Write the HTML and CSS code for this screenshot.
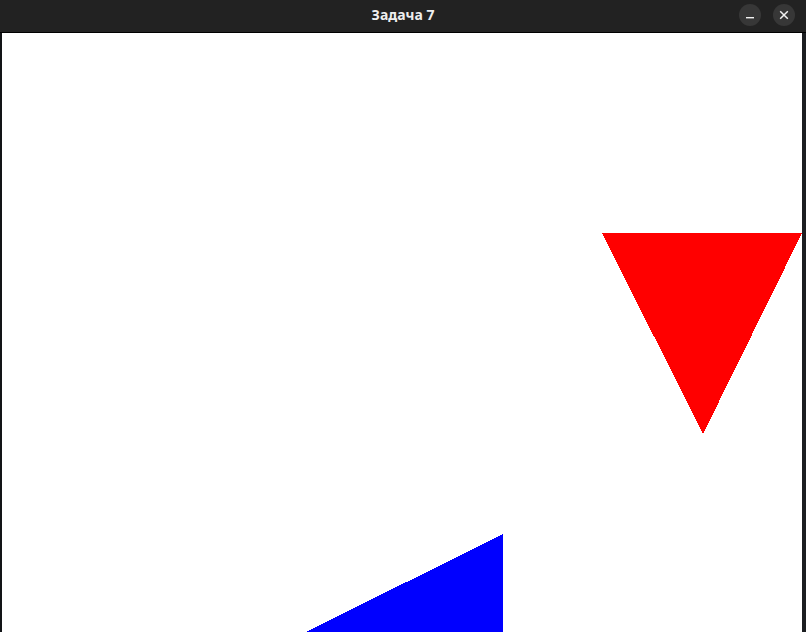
FILE: index.html
```html
<!DOCTYPE html>
<html lang="ru">
<head>
<meta charset="utf-8">
<title>Задача 7</title>
<link rel="stylesheet" href="styles.css">
</head>
<body>
<div class="window">
  <header class="titlebar">
    <span class="title">Задача 7</span>
    <div class="controls">
      <button class="ctl" aria-label="Свернуть">
        <svg width="10" height="10" viewBox="0 0 10 10"><rect x="1" y="7" width="8" height="1.4" fill="#f2f2f2"/></svg>
      </button>
      <button class="ctl" aria-label="Закрыть">
        <svg width="10" height="10" viewBox="0 0 10 10"><path d="M1.2 1.2 L8.8 8.8 M8.8 1.2 L1.2 8.8" stroke="#f2f2f2" stroke-width="1.5"/></svg>
      </button>
    </div>
  </header>
  <div class="body">
    <div class="edge-left"></div>
    <main class="canvas">
      <svg class="scene" width="800" height="599" viewBox="0 0 800 599">
        <polygon points="600,200 800,200 701,401" fill="#ff0000"/>
        <polygon points="501,501 501,700 101,700" fill="#0000ff"/>
      </svg>
    </main>
    <div class="edge-right"></div>
  </div>
</div>
</body>
</html>
```
FILE: styles.css
```css
html, body {
  margin: 0;
  padding: 0;
  background: #16181b;
  overflow: hidden;
}
.window {
  width: 806px;
  height: 632px;
  display: flex;
  flex-direction: column;
}
.titlebar {
  height: 32px;
  flex: 0 0 32px;
  background: #222222;
  border-bottom: 1px solid #000000;
  position: relative;
  display: flex;
  align-items: center;
  justify-content: center;
}
.title {
  font-family: "Noto Sans", "DejaVu Sans", sans-serif;
  font-weight: 700;
  font-size: 14px;
  color: #eeeeee;
  margin-top: -3px;
}
.controls {
  position: absolute;
  right: 11px;
  top: 4px;
  display: flex;
  gap: 12px;
}
.ctl {
  width: 22px;
  height: 22px;
  border-radius: 50%;
  border: 0;
  padding: 0;
  background: #373737;
  display: flex;
  align-items: center;
  justify-content: center;
}
.body {
  flex: 1;
  display: flex;
  min-height: 0;
}
.edge-left {
  width: 2px;
  background: #121417;
}
.edge-right {
  flex: 1;
  background: #1c1e21;
}
.canvas {
  width: 800px;
  background: #ffffff;
  overflow: hidden;
}
.scene {
  display: block;
  shape-rendering: crispEdges;
}
```
